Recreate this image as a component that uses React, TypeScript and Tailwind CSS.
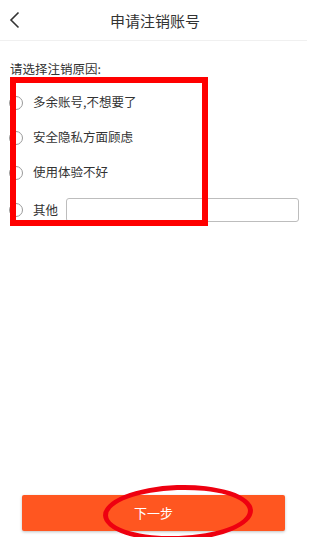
import { useState } from "react";

const reasons = ["多余账号,不想要了", "安全隐私方面顾虑", "使用体验不好"];

const Radio = ({ checked }: { checked: boolean }) => (
  <span className="w-[14px] h-[14px] rounded-full border border-[#9a9a9a] bg-white flex items-center justify-center shrink-0">
    {checked && <span className="w-[8px] h-[8px] rounded-full bg-[#ff5722]" />}
  </span>
);

const App = () => {
  const [selected, setSelected] = useState<number | null>(null);
  const [other, setOther] = useState("");

  return (
    <div
      className="relative w-[307px] h-[537px] bg-white flex flex-col overflow-hidden text-[#333]"
      style={{ fontFamily: '"Noto Sans CJK SC", "Noto Sans", sans-serif' }}
    >
      {/* Header */}
      <div className="h-[41px] shrink-0 flex items-center border-b border-[#f0f0f0]">
        <button className="w-[40px] h-full flex items-center pl-[9px]">
          <svg width="11" height="18" viewBox="0 0 11 18" fill="none">
            <path d="M9.5 1.5 2 9l7.5 7.5" stroke="#333" strokeWidth="1.6" />
          </svg>
        </button>
        <h1 className="flex-1 text-center text-[15px] leading-none text-[#333] pr-[37px]">申请注销账号</h1>
      </div>

      {/* Reasons */}
      <p className="mt-[19px] px-[10px] text-[12.5px] leading-[18px]">请选择注销原因:</p>
      <div className="mt-[7px] flex flex-col">
        {reasons.map((r, i) => (
          <label
            key={r}
            className="h-[35px] flex items-center gap-[10px] pl-[9px] cursor-pointer"
            onClick={() => setSelected(i)}
          >
            <Radio checked={selected === i} />
            <span className="text-[12.5px]">{r}</span>
          </label>
        ))}
        <div className="h-[40px] flex items-center pl-[9px] pr-[8px]">
          <span className="flex items-center gap-[10px] cursor-pointer" onClick={() => setSelected(3)}>
            <Radio checked={selected === 3} />
            <span className="text-[12.5px]">其他</span>
          </span>
          <input
            value={other}
            onChange={(e) => setOther(e.target.value)}
            className="ml-[8px] flex-1 min-w-0 h-[24px] border border-[#bdbdbd] rounded-[3px] px-2 text-[13px] outline-none"
          />
        </div>
      </div>

      {/* Next button */}
      <button className="mt-auto mb-[6px] mx-[22px] h-[36px] bg-[#ff5620] text-white text-[13px] rounded-[2px] shadow-[0_1px_3px_rgba(0,0,0,0.25)]">
        下一步
      </button>

      {/* Annotations */}
      <div className="absolute left-[10px] top-[77px] w-[198px] h-[149px] border-[6px] border-[#ff0000] pointer-events-none" />
      <div className="absolute left-[103px] top-[485px] w-[150px] h-[56px] rounded-[50%] border-[5px] border-[#ee0010] -rotate-2 pointer-events-none" />
    </div>
  );
};

export default App;
